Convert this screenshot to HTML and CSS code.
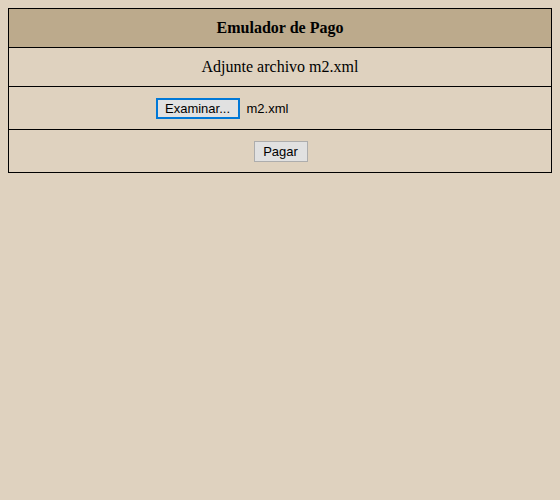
FILE: index.html
```html
<!DOCTYPE html>
<html>
<head>
<meta charset="utf-8">
<link rel="stylesheet" href="styles.css">
</head>
<body>
<div class="panel">
  <div class="row head">Emulador de Pago</div>
  <div class="row msg">Adjunte archivo m2.xml</div>
  <div class="row file">
    <div class="file-input">
      <span class="btn btn-focus">Examinar...</span>
      <span class="fname">m2.xml</span>
    </div>
  </div>
  <div class="row submit">
    <span class="btn">Pagar</span>
  </div>
</div>
</body>
</html>
```
FILE: styles.css
```css
html, body {
  margin: 0;
  background: #dfd2bf;
}
body {
  padding: 8px;
  font-family: "Liberation Serif", "Times New Roman", serif;
  color: #000;
}
.panel {
  border: 1px solid #000;
  display: flex;
  flex-direction: column;
}
.row {
  display: flex;
  align-items: center;
  justify-content: center;
  border-top: 1px solid #000;
  font-size: 16px;
}
.row:first-child {
  border-top: none;
}
.head {
  height: 38px;
  background: #bcaa8c;
  font-weight: bold;
}
.msg {
  height: 38px;
}
.file, .submit {
  height: 42px;
}
.file-input {
  width: 250px;
  margin-left: 1px;
  display: flex;
  align-items: center;
  font-family: "Liberation Sans", Tahoma, sans-serif;
  font-size: 13px;
}
.btn {
  box-sizing: border-box;
  height: 21px;
  display: inline-flex;
  align-items: center;
  justify-content: center;
  padding: 0 6px;
  background: #e1e1e1;
  border: 1px solid #adadad;
  font-family: "Liberation Sans", Tahoma, sans-serif;
  font-size: 13px;
  color: #000;
}
.btn-focus {
  width: 84px;
  border: 2px solid #0078d7;
}
.submit .btn {
  width: 54px;
  margin-left: 1px;
}
.fname {
  margin-left: 7px;
}
```
